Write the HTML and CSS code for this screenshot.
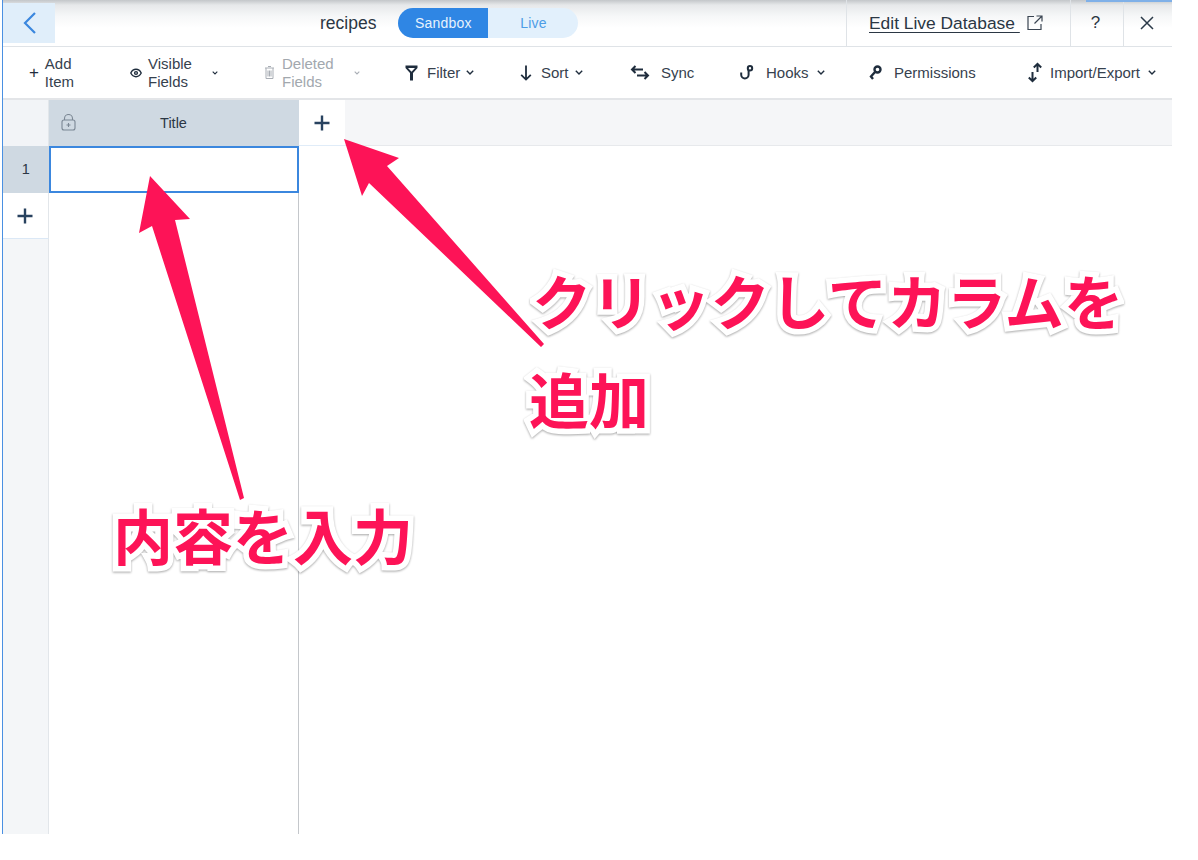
FILE: index.html
```html
<!DOCTYPE html>
<html lang="ja">
<head>
<meta charset="utf-8">
<title>recipes</title>
<link rel="stylesheet" href="styles.css">
</head>
<body>
<div class="app">
  <header class="topbar">
    <button class="back"><svg width="16" height="24" viewBox="0 0 16 24"><path d="M13 2 3 12l10 10" fill="none" stroke="#3b87de" stroke-width="2.2"/></svg></button>
    <div class="title-area">
      <span class="db-name">recipes</span>
      <div class="pill"><span class="pill-on">Sandbox</span><span class="pill-off">Live</span></div>
    </div>
    <a class="edit-live"><span class="edit-text">Edit Live Database&nbsp;</span>
      <svg width="16" height="16" viewBox="0 0 16 16" fill="none" stroke="#3a4552" stroke-width="1.2"><path d="M7 1.500H1v13h13V9"/><path d="M9.500 1H15v5.500M15 1 7.500 8.500"/></svg>
    </a>
    <div class="top-btn help">?</div>
    <div class="top-btn close"><svg width="14" height="14" viewBox="0 0 14 14"><path d="M1 1l12 12M13 1 1 13" stroke="#2b3a49" stroke-width="1.500"/></svg></div>
  </header>

  <nav class="toolbar">
    <div class="tool t-add"><span class="plus">+</span><span class="two">Add<br>Item</span></div>
    <div class="tool t-vis"><svg width="12" height="10" viewBox="0 0 12 10" fill="none" stroke="#1f2d3d" stroke-width="1.400"><path d="M.8 5C2 2.500 4 1.300 6 1.300S10 2.500 11.200 5C10 7.500 8 8.700 6 8.700S2 7.500.8 5Z"/><circle cx="6" cy="5" r="1.400"/></svg><span class="two">Visible<br>Fields</span><svg class="chev small" width="6" height="4" viewBox="0 0 6 4"><path d="M.7.7 3 3 5.300.7" fill="none" stroke="#1f2d3d" stroke-width="1.100"/></svg></div>
    <div class="tool t-del"><svg width="11" height="15" viewBox="0 0 11 15" fill="none" stroke="#a9aeb5" stroke-width="1"><path d="M1 3h9M4 1.500h3M2 3v10.500h7V3M4 5.500v6M5.500 5.500v6M7 5.500v6"/></svg><span class="two">Deleted<br>Fields</span><svg class="chev small" width="6" height="4" viewBox="0 0 6 4"><path d="M.7.7 3 3 5.300.7" fill="none" stroke="#a9aeb5" stroke-width="1.100"/></svg></div>
    <div class="tool t-filter"><svg width="13" height="16" viewBox="0 0 13 16"><path d="M.5 .5h12v2.500L8 8V15.500H5V8L.5 3ZM3 3l3.500 3.800L10 3Z" fill="#1f2d3d" fill-rule="evenodd"/></svg><span>Filter</span><svg class="chev" width="8" height="5" viewBox="0 0 8 5"><path d="M.8.8 4 4 7.200.8" fill="none" stroke="#1f2d3d" stroke-width="1.400"/></svg></div>
    <div class="tool t-sort"><svg width="12" height="16" viewBox="0 0 12 16" fill="none" stroke="#1f2d3d" stroke-width="1.800"><path d="M6 .5v14M1.200 9.800 6 14.600l4.800-4.800"/></svg><span>Sort</span><svg class="chev" width="8" height="5" viewBox="0 0 8 5"><path d="M.8.8 4 4 7.200.8" fill="none" stroke="#1f2d3d" stroke-width="1.400"/></svg></div>
    <div class="tool t-sync"><svg width="20" height="15" viewBox="0 0 20 15" fill="none" stroke="#1f2d3d" stroke-width="2"><path d="M13 4.500H2M5.500 1 2 4.500 5.500 8M7 10.500h11M14.500 7l3.500 3.500L14.500 14"/></svg><span>Sync</span></div>
    <div class="tool t-hooks"><svg width="14" height="15" viewBox="0 0 14 15" fill="none" stroke="#1f2d3d" stroke-width="2"><path d="M1.200 7.500v2.300a3.700 3.700 0 0 0 7.400 0V5"/><circle cx="10" cy="3.300" r="2.200"/></svg><span>Hooks</span><svg class="chev" width="8" height="5" viewBox="0 0 8 5"><path d="M.8.8 4 4 7.200.8" fill="none" stroke="#1f2d3d" stroke-width="1.400"/></svg></div>
    <div class="tool t-perm"><svg width="13" height="15" viewBox="0 0 13 15" fill="none" stroke="#1f2d3d" stroke-width="2.400"><circle cx="8.500" cy="4.500" r="3"/><path d="M6 7 2 11.500 4 14"/></svg><span>Permissions</span></div>
    <div class="tool t-imp"><svg width="16" height="21" viewBox="0 0 16 21" fill="none" stroke="#1f2d3d" stroke-width="2"><path d="M10.500 10V2M6.800 5.500l3.700-3.700 3.700 3.700M5.500 10v9M1.800 15.500l3.700 3.700 3.700-3.700"/></svg><span>Import/Export</span><svg class="chev" width="8" height="5" viewBox="0 0 8 5"><path d="M.8.8 4 4 7.200.8" fill="none" stroke="#1f2d3d" stroke-width="1.400"/></svg></div>
  </nav>

  <section class="sheet">
    <div class="corner"></div>
    <div class="col-head">
      <svg class="lock" width="15" height="17" viewBox="0 0 15 17" fill="none" stroke="#7b8794" stroke-width="1.100"><rect x="1" y="6" width="13" height="10" rx="2"/><path d="M3.500 6V4.500a4 4 0 0 1 8 0V6M7.500 9v4M5.500 11h4"/></svg>
      <span>Title</span>
    </div>
    <div class="add-col"><svg width="16" height="16" viewBox="0 0 16 16"><path d="M8 .5v15M.5 8h15" stroke="#28425f" stroke-width="2.400"/></svg></div>
    <div class="head-rest"></div>

    <div class="row-num">1</div>
    <div class="cell-active"></div>
    <div class="blank"></div>

    <div class="add-row"><svg width="16" height="16" viewBox="0 0 16 16"><path d="M8 .5v15M.5 8h15" stroke="#28425f" stroke-width="2.400"/></svg></div>
    <div class="col-body"></div>
    <div class="blank"></div>

    <div class="num-rest"></div>
  </section>
</div>

<svg class="arrows" width="1198" height="860" viewBox="0 0 1198 860">
  <path fill="#fd1357" d="M344 139 399 158 387 166 544 344 541 347 369 183 362 196Z"/>
  <path fill="#fd1357" d="M150 176 190 219 175 220 244 498 240 500 152 226 139 233Z"/>
</svg>
<div class="note note-column">クリックしてカラムを</div>
<div class="note note-column2">追加</div>
<div class="note note-content">内容を入力</div>
</body>
</html>
```
FILE: styles.css
```css
* { box-sizing: border-box; }
html, body { margin: 0; padding: 0; background: #fff; }
body { position: relative; width: 1198px; height: 860px; overflow: hidden; font-family: "Liberation Sans", Arial, sans-serif; color: #2b3744; }
svg { flex: none; }

.app { margin-left: 2px; width: 1170px; height: 834px; border-left: 1.500px solid #4a90e2; display: flex; flex-direction: column; background: #fff; }

.topbar { position: relative; height: 47px; flex: none; display: flex; align-items: stretch; border-bottom: 1px solid #dfe3e7; background: linear-gradient(#c3c6c9 0, #e6e8ea 5px, #f6f7f8 16px, #fff 28px); }
.topbar::after { content: ""; position: absolute; right: 0; top: 0; width: 86px; height: 1.500px; background: #7fb0e8; }
.back { width: 52px; margin: 3px 0; border: 0; background: #e0eefa; display: flex; align-items: center; justify-content: flex-start; padding: 0 0 0 19px; }
.title-area { flex: 1; display: flex; align-items: center; padding-left: 265px; gap: 22px; }
.db-name { font-size: 17.500px; color: #2b3744; }
.pill { display: flex; height: 30px; width: 180px; border-radius: 15px; overflow: hidden; font-size: 14px; letter-spacing: .2px; background: #e2f0fc; }
.pill-on { width: 90px; background: #2f86e4; color: #e6f2fd; display: flex; align-items: center; justify-content: center; }
.pill-off { flex: 1; color: #4d9de6; display: flex; align-items: center; justify-content: center; }
.edit-live { width: 224px; border-left: 1px solid #dfe3e7; display: flex; align-items: center; gap: 7px; padding-left: 22px; color: #2b3744; }
.edit-text { font-size: 17.400px; text-decoration: underline; text-underline-offset: 3px; text-decoration-thickness: 1px; }
.top-btn { border-left: 1px solid #dfe3e7; display: flex; align-items: center; justify-content: center; font-size: 17px; padding-right: 3px; }
.help { width: 53px; }
.close { width: 49px; padding-right: 2px; }

.toolbar { height: 53px; flex: none; display: flex; align-items: center; padding-left: 26px; border-bottom: 2px solid #e3e5e8; font-size: 15px; color: #36414e; }
.tool { display: flex; align-items: center; flex: none; white-space: nowrap; }
.two { line-height: 18px; }
.plus { font-size: 17px; width: 16px; color: #1f2d3d; }
.chev { margin-left: -3px; }
.t-add { width: 45px; margin-right: 56px; }
.t-vis { width: 88px; margin-right: 46px; gap: 6px; }
.t-vis .chev { margin-left: 14px; }
.t-del { width: 96px; margin-right: 45px; gap: 7px; color: #a2a8ae; }
.t-del .chev { margin-left: 13px; }
.t-filter { width: 71px; margin-right: 44px; gap: 9px; }
.t-sort { width: 64px; margin-right: 46px; gap: 9px; }
.t-sync { width: 65px; margin-right: 45px; gap: 11px; }
.t-hooks { width: 85px; margin-right: 44px; gap: 12px; }
.t-hooks .chev { margin-left: -4px; }
.t-perm { width: 106px; margin-right: 52px; gap: 12px; }
.t-imp { width: 133px; gap: 7px; }
.t-imp .chev { margin-left: 1px; }

.sheet { flex: 1; display: grid; grid-template-columns: 45.500px 250px 46px 1fr; grid-template-rows: 46px 47px 46px 1fr; }
.corner { background: #f2f4f7; border-right: 1px solid #e2e6ea; }
.col-head { background: #cfd9e2; display: flex; align-items: center; justify-content: center; position: relative; font-size: 14.500px; color: #2b3744; }
.lock { position: absolute; left: 12px; top: 14px; }
.add-col { background: #fff; display: flex; align-items: center; justify-content: center; border-bottom: 1px solid #e0ecf8; }
.head-rest { background: #f5f6f8; border-bottom: 1px solid #e7e9ec; }
.row-num { background: #cfd9e2; display: flex; align-items: center; justify-content: center; font-size: 14.500px; padding-bottom: 1px; }
.cell-active { border: 2px solid #3b87de; background: #fff; }
.blank { grid-column: 3 / 5; }
.add-row { background: #fff; display: flex; align-items: center; justify-content: center; border-bottom: 1px solid #dbe8f6; border-right: 1px solid #e2e6ea; }
.col-body { grid-row: 3 / 5; grid-column: 2; border-right: 1px solid #c4c7cb; }
.num-rest { grid-row: 4; grid-column: 1; background: #f4f6f8; border-right: 1px solid #e2e6ea; }

.arrows { position: absolute; left: 0; top: 0; pointer-events: none; }
.note { position: absolute; font-family: "Noto Sans CJK JP", "Noto Sans CJK SC", sans-serif; font-weight: 700; font-size: 60px; line-height: 100px; color: #fd1357; white-space: nowrap; -webkit-text-stroke: 11px #fff; paint-order: stroke fill; filter: drop-shadow(0 1px 1px rgba(0,0,0,.35)); }
.note-column { left: 532px; top: 249px; font-size: 59.500px; }
.note-column2 { left: 529px; top: 348px; }
.note-content { left: 113px; top: 484px; }
```
